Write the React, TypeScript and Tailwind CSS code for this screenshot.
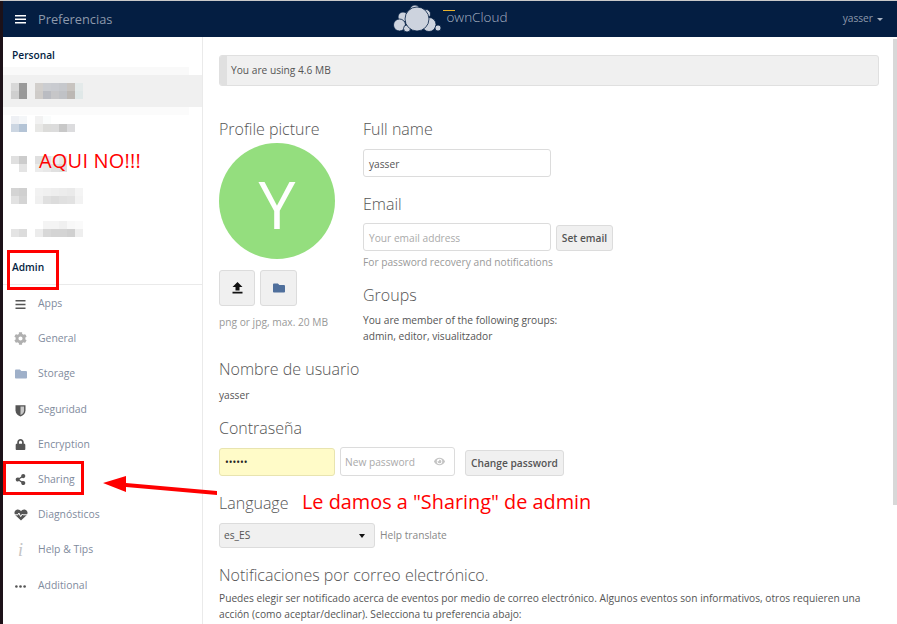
import { FaCog, FaFolder, FaLock, FaShareAlt, FaEye } from "react-icons/fa";

const blurRows = [
  { gap: "", top: ["#d8d8d8", "#9a9a9a"], bottom: ["#cfcfcf", "#999999"], text: ["#d2cfcc", "#cbcdd1", "#c9cbd0", "#c6c8cc", "#c8c4c0", "#e4eaea"], text2: ["#cfccc9", "#babcc2", "#c6c6c8", "#c0c2c6", "#bcb8b4", "#e0e8e8"] },
  { gap: "mt-[1px]", top: ["#eef0f4", "#f4f6f8"], bottom: ["#ccd6e2", "#b4c4d6"], text: ["#f2f2f2", "#fafcfc", "#ffffff", "#ffffff", "#ffffff", "#ffffff"], text2: ["#e8e8e6", "#dcdcda", "#dcdcdc", "#c8c8c8", "#dcdcde", "#ffffff"] },
  { gap: "mt-[24px]", top: ["#e0e0e0", "#cccccc"], bottom: ["#ffffff", "#e4e4e4"], text: ["#e0e0e0", "#e4e4e4", "#f0f0f0", "#e8e8e8", "#ffffff", "#ffffff"], text2: ["#ececec", "#e8e8e8", "#e0e0e0", "#dddddd", "#ffffff", "#ffffff"] },
  { gap: "mt-[16px]", top: ["#d4d4d4", "#d0d0d0"], bottom: ["#e2e2e2", "#d4d4d4"], text: ["#f2f2f2", "#f0f0f0", "#eeeeee", "#ececec", "#eaeaea", "#f4f4f4"], text2: ["#f0f0f0", "#e0e0e0", "#dcdcdc", "#e0e0e0", "#e2e2e2", "#f2f2f2"] },
  { gap: "mt-[17px]", top: ["#ffffff", "#ffffff"], bottom: ["#e4e4e4", "#dcdcdc"], text: ["#ffffff", "#f4f4f4", "#f4f4f4", "#f0f0f0", "#f8f8f8", "#fafafa"], text2: ["#ececec", "#d8d8d8", "#d4d4d4", "#d4d4d4", "#d0d0d0", "#eeeeee"] },
];

function BlurItem({ row, active }: { row: (typeof blurRows)[number]; active?: boolean }) {
  return (
    <div className={active ? "flex h-[32px] items-center gap-[8px] bg-[#f0f0f0] pl-[8px]" : `flex items-center gap-[8px] pl-[8px] ${row.gap}`}>
      <div className="flex flex-col">
        {[row.top, row.bottom].map((cells, i) => (
          <div key={i} className="flex">
            {cells.map((c, j) => (
              <div key={j} className="h-[8px] w-[8px]" style={{ background: c }} />
            ))}
          </div>
        ))}
      </div>
      <div className="flex flex-col">
        {[row.text, row.text2].map((cells, i) => (
          <div key={i} className="flex">
            {cells.map((c, j) => (
              <div key={j} className="h-[8px] w-[8px]" style={{ background: c }} />
            ))}
          </div>
        ))}
      </div>
    </div>
  );
}

function BarsIcon() {
  return (
    <svg width="11" height="11" viewBox="0 0 11 11" className="text-[#555]">
      <path d="M0.5 1h10v1.6h-10zM0.5 4.7h10v1.6h-10zM0.5 8.4h10V10h-10z" fill="currentColor" />
    </svg>
  );
}

function ShieldIcon() {
  return (
    <svg width="11" height="13" viewBox="0 0 11 13">
      <path d="M0.5 1.2h10v5.2c0 3-2.2 4.9-5 6-2.8-1.1-5-3-5-6z" fill="#555" />
      <path d="M5.5 2.6h3.6v3.9c0 2.1-1.5 3.5-3.6 4.4z" fill="#c8c8c8" />
    </svg>
  );
}

function PulseHeartIcon() {
  return (
    <svg width="14" height="12" viewBox="0 0 14 12">
      <path d="M7 11.5 1.4 6.2C-.4 4.3.4 1 3.4.6 5 .4 6.2 1.2 7 2.3 7.8 1.2 9 .4 10.6.6c3 .4 3.8 3.7 2 5.6z" fill="#555" />
      <path d="M0.5 5.8h3.4l1-1.8 1.8 3.6 1.4-2.4.8.6h4.6" fill="none" stroke="#fff" strokeWidth="1" />
    </svg>
  );
}

function DotsIcon() {
  return (
    <svg width="11" height="3" viewBox="0 0 11 3">
      <circle cx="1.4" cy="1.5" r="1.3" fill="#555" />
      <circle cx="5.5" cy="1.5" r="1.3" fill="#555" />
      <circle cx="9.6" cy="1.5" r="1.3" fill="#555" />
    </svg>
  );
}

const adminItems = [
  { label: "Apps", h: "h-[36px] pt-[2px]", icon: <BarsIcon /> },
  { label: "General", h: "h-[35px]", icon: <FaCog className="text-[13px] text-[#b0b0b0]" /> },
  { label: "Storage", h: "h-[35px]", icon: <FaFolder className="text-[12px] text-[#9fb0c9]" /> },
  { label: "Seguridad", h: "h-[36px] pt-[2px]", icon: <ShieldIcon /> },
  { label: "Encryption", h: "h-[35px]", icon: <FaLock className="text-[11px] text-[#555]" /> },
  { label: "Sharing", h: "h-[35px]", icon: <FaShareAlt className="text-[11px] text-[#555]" /> },
  { label: "Diagnósticos", h: "h-[35px]", icon: <PulseHeartIcon /> },
  { label: "Help & Tips", h: "h-[35px]", icon: <span className="font-['Liberation_Serif',serif] text-[18px] italic leading-none text-[#c4c4c4]">i</span> },
  { label: "Additional", h: "h-[36px] pt-[2px]", icon: <DotsIcon /> },
];

function Heading({ children, className = "" }: { children: React.ReactNode; className?: string }) {
  return <h2 className={`text-[16px] leading-[22px] font-light text-[#555] ${className}`}>{children}</h2>;
}

function Logo() {
  return (
    <svg width="50" height="30" viewBox="0 0 50 30">
      <g fill="#cdd3de" stroke="#041e42" strokeWidth="0.8">
        <circle cx="22" cy="6" r="5" />
        <circle cx="10" cy="13" r="5" />
        <circle cx="33" cy="10" r="4.5" />
        <circle cx="6.5" cy="21" r="6" />
        <circle cx="14" cy="24.5" r="3.5" />
        <circle cx="36" cy="20.5" r="7" />
        <circle cx="45" cy="24" r="3" />
        <circle cx="24" cy="15" r="12" />
      </g>
    </svg>
  );
}

export default function App() {
  return (
    <div className="relative h-[624px] w-[897px] overflow-hidden bg-white font-['Open_Sans',sans-serif]">
      <div className="h-px bg-[#c9c9c9]" />
      <div className="flex h-[623px]">
        <div className="w-[3px] shrink-0 bg-[#1c1118]" />
        <div className="flex min-w-0 flex-1 flex-col">
          <header className="relative flex h-[36px] shrink-0 items-center bg-[#041e42] pl-[12px] pr-[14px]">
            <svg width="11" height="9" viewBox="0 0 11 9" className="mr-[12px]">
              <path d="M0 0h11v1.5H0zM0 3.5h11V5H0zM0 7h11v1.5H0z" fill="#fff" />
            </svg>
            <span className="text-[12.8px] leading-none text-[#8d99ab]">Preferencias</span>
            <div className="ml-[281px] flex items-center">
              <Logo />
              <div className="relative mb-[3px] ml-[3px] text-[13.5px] font-light leading-none text-[#a8b2c2]">
                <span className="absolute -left-[3px] -top-[1px] h-px w-[12px] bg-[#e8b32e]" />
                ownCloud
              </div>
            </div>
            <div className="ml-auto flex items-center gap-[4px] text-[10.2px] text-[#8d99ab]">
              yasser
              <span className="mt-[2px] border-x-[3px] border-t-[3px] border-x-transparent border-t-[#a8b2c2]" />
            </div>
          </header>

          <div className="flex min-h-0 flex-1">
            <aside className="w-[200px] shrink-0 border-r border-[#eaeaea]">
              <div className="pl-[9px] pt-[12px] text-[10.2px] font-semibold leading-[13px] text-[#041e42]">Personal</div>
              <div className="mt-[5px] h-[8px] w-[186px] bg-[#f9f9f9]" />
              <BlurItem row={blurRows[0]} active />
              <div className="h-[8px] w-[186px] bg-[#fbfbfb]" />
              {blurRows.slice(1).map((row, i) => (
                <BlurItem key={i} row={row} />
              ))}
              <div className="flex h-[48px] items-end border-b border-[#eaeaea] pb-[10px] pl-[9px] text-[10.2px] font-semibold leading-[14px] text-[#041e42]">
                Admin
              </div>
              {adminItems.map((item) => (
                <div key={item.label} className={`flex items-center ${item.h}`}>
                  <span className="flex w-[35px] justify-center">{item.icon}</span>
                  <span className="text-[10.4px] text-[#7f8b9d]">{item.label}</span>
                </div>
              ))}
            </aside>

            <main className="relative min-w-0 flex-1 pl-[16px] pr-[18px] pt-[18px]">
              <div className="flex h-[31px] items-center overflow-hidden rounded-[3px] border border-[#e0e0e0] bg-[#f0f0f0]">
                <div className="h-full w-[7px] bg-[#e0e0e0]" />
                <span className="ml-[4px] pt-[1px] text-[10.2px] text-[#555]">You are using 4.6 MB</span>
              </div>

              <div className="mt-[32px] flex">
                <div className="w-[144px] shrink-0">
                  <Heading>Profile picture</Heading>
                  <div className="mt-[3px] flex h-[116px] w-[116px] items-center justify-center rounded-full bg-[#94de7e] pt-[3px] text-[66px] leading-none text-white">
                    Y
                  </div>
                  <div className="mt-[11px] flex gap-[5px]">
                    <button className="flex h-[36px] w-[36px] items-center justify-center rounded-[3px] border border-[#dcdcdc] bg-[#f0f0f0]">
                      <svg width="11" height="12" viewBox="0 0 11 12">
                        <path d="M5.5 0 10.5 5H7.5v3.4h-4V5H.5zM.5 9.8h10V11.5H.5z" fill="#111" />
                      </svg>
                    </button>
                    <button className="flex h-[36px] w-[37px] items-center justify-center rounded-[3px] border border-[#dcdcdc] bg-[#f0f0f0]">
                      <FaFolder className="text-[12px] text-[#4f6f9c]" />
                    </button>
                  </div>
                  <p className="mt-[9px] text-[10.2px] leading-[14px] text-[#999]">png or jpg, max. 20 MB</p>
                </div>

                <div>
                  <Heading>Full name</Heading>
                  <div className="mt-[9px] flex h-[28px] w-[188px] items-center rounded-[3px] border border-[#dcdcdc] pl-[5px] pt-[3px] text-[10.2px] text-[#555]">
                    yasser
                  </div>
                  <Heading className="mt-[16px]">Email</Heading>
                  <div className="mt-[8px] flex items-end gap-[5px]">
                    <div className="flex h-[28px] w-[188px] items-center rounded-[3px] border border-[#dcdcdc] pl-[5px] pt-[3px] text-[10.2px] text-[#aaa]">
                      Your email address
                    </div>
                    <button className="h-[26px] w-[57px] rounded-[3px] border border-[#dcdcdc] bg-[#f0f0f0] pt-[1px] text-[10.2px] font-semibold text-[#555]">
                      Set email
                    </button>
                  </div>
                  <p className="mt-[4px] text-[10.2px] leading-[14px] text-[#999]">For password recovery and notifications</p>
                  <Heading className="mt-[15px]">Groups</Heading>
                  <p className="mt-[6px] text-[10.2px] leading-[16px] text-[#555]">
                    You are member of the following groups:
                    <br />
                    admin, editor, visualitzador
                  </p>
                </div>
              </div>

              <Heading className="mt-[14px]">Nombre de usuario</Heading>
              <p className="mt-[7px] text-[10.2px] leading-[16px] text-[#555]">yasser</p>
              <Heading className="mt-[14px]">Contraseña</Heading>
              <div className="mt-[8px] flex items-end">
                <div className="flex h-[28px] w-[116px] items-center rounded-[3px] border border-[#e8e4b0] bg-[#fffbc8] pl-[5px] text-[10px] leading-none text-[#222]">
                  ••••••
                </div>
                <div className="ml-[5px] flex h-[29px] w-[115px] items-center justify-between rounded-[3px] border border-[#dcdcdc] pl-[4px] pr-[9px] text-[10.2px] text-[#aaa]">
                  <span className="pt-[3px]">New password</span>
                  <FaEye className="text-[11px] text-[#c4c4c4]" />
                </div>
                <button className="ml-[10px] h-[26px] w-[99px] rounded-[3px] border border-[#dcdcdc] bg-[#f0f0f0] pt-[1px] text-[10.2px] font-semibold text-[#555]">
                  Change password
                </button>
              </div>
              <Heading className="mt-[16px]">Language</Heading>
              <div className="mt-[9px] flex items-center gap-[5px]">
                <div className="flex h-[25px] w-[156px] items-center justify-between rounded-[3px] border border-[#dcdcdc] bg-[#f0f0f0] pl-[4px] pr-[9px] text-[10.2px] text-[#555]">
                  <span className="pt-[1px]">es_ES</span>
                  <span className="border-x-[3.5px] border-t-[4px] border-x-transparent border-t-[#111]" />
                </div>
                <span className="text-[10.2px] text-[#888]">Help translate</span>
              </div>
              <Heading className="mt-[16px]">Notificaciones por correo electrónico.</Heading>
              <p className="mt-[4px] text-[10.2px] leading-[16px] text-[#555]">
                Puedes elegir ser notificado acerca de eventos por medio de correo electrónico. Algunos eventos son informativos, otros requieren una acción (como aceptar/declinar). Selecciona tu preferencia abajo:
              </p>

              <div className="absolute right-0 top-[2px] h-[466px] w-[4px] bg-[#d8d8d8]" />
            </main>
          </div>
        </div>
      </div>

      {/* annotations painted over the screenshot */}
      <span className="absolute left-[39px] top-[148px] text-[20px] leading-[26px] tracking-[0.2px] text-[#ff0000]">AQUI NO!!!</span>
      <span className="absolute left-[302px] top-[489px] text-[19.85px] leading-[26px] text-[#ff0000]">Le damos a "Sharing" de admin</span>
      <div className="absolute left-[7px] top-[250px] h-[40px] w-[52px] border-[3px] border-[#ff0000]" />
      <div className="absolute left-[3px] top-[461px] h-[34px] w-[81px] border-[3px] border-[#ff0000]" />
      <svg width="125" height="30" viewBox="0 0 125 30" className="absolute left-[100px] top-[472px]">
        <path d="M3 11 26 4v7l91 8v4l-91-8v5z" fill="#ff0000" />
      </svg>
    </div>
  );
}
